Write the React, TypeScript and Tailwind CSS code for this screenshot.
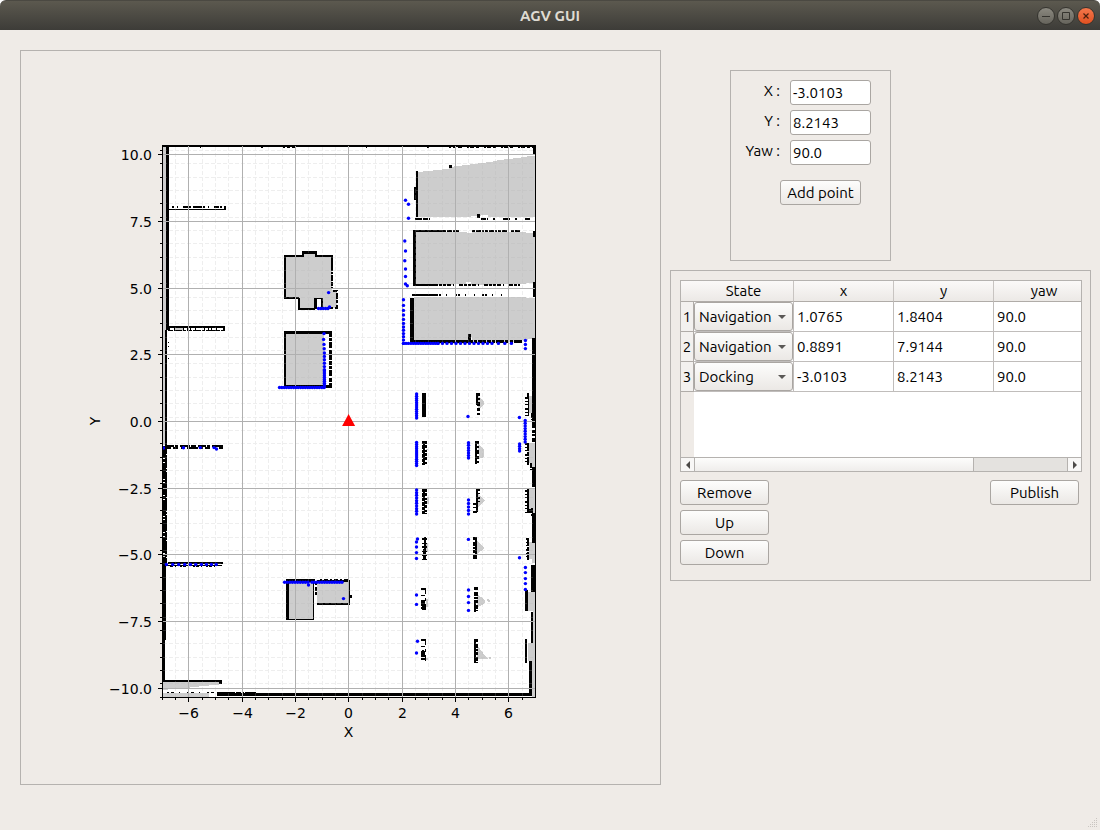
import React, { useState } from 'react';

type Box = [number, number, number, number];
type Point = [number, number];

const UI_FONT = "font-['Ubuntu','Noto_Sans','Open_Sans',sans-serif]";

const snap = (value: number) => Math.floor(value) + 0.5;

const X_MAJOR = [
  { at: 188.5, label: '−6' },
  { at: 242.5, label: '−4' },
  { at: 295.5, label: '−2' },
  { at: 348.5, label: '0' },
  { at: 402.5, label: '2' },
  { at: 455.5, label: '4' },
  { at: 508.5, label: '6' },
];

const Y_MAJOR = [
  { at: 154.5, label: '10.0' },
  { at: 221.5, label: '7.5' },
  { at: 288.5, label: '5.0' },
  { at: 354.5, label: '2.5' },
  { at: 421.5, label: '0.0' },
  { at: 488.5, label: '−2.5' },
  { at: 554.5, label: '−5.0' },
  { at: 621.5, label: '−7.5' },
  { at: 688.5, label: '−10.0' },
];

const X_MINOR = Array.from({ length: 28 }, (_, i) => snap(162.3 + i * 13.33)).filter(
  (x) => !X_MAJOR.some((m) => Math.abs(m.at - x) < 2),
);
const Y_MINOR = Array.from({ length: 42 }, (_, i) => snap(150.4 + i * 13.337));

/* Unknown space: light grey areas of the occupancy map. */
const UNKNOWN = [
  'M163 146h3v184h-1v115h-2z',
  'M163 555h2v8h-2z',
  'M163 682h56v3h-10v1h-10v1h-9v1h-16v1h-6v1h-5z',
  'M163 693h46v4h-46z',
  'M285 256h18v-4h14v4h15v34h5v18h-16v-10h-6v10l-16 2v-12h-14z',
  'M285 332h39v54h-39z',
  'M418 172h5v-1h10v-1h9v-1h7v-2h5v-1h8v-1h8v-1h8v-1h8v-1h7v-1h4v-1h7v-1h9v-1h8v-1h6v-1h8v61h-47v-2h-7v1h-10v1h-53z',
  'M416 232h51v1h5v-1h54v1h9v50h-9v1h-33v1h-22v-3h-5v2h-12v1h-38z',
  'M414 297h112v1h9v41h-7v1h-10v2h-46v-5h-4v5h-54z',
  'M288 582h26v38h-26z',
  'M317 582h32v22h-32z',
  'M529 396h6v24h-1v-7h-5z',
  'M528 443h7v24h-3v-4h-4z',
  'M529 489h6v25h-2v-4h-4z',
  'M529 542h6v21h-3v-4h-3z',
  'M528 592h7v19h-7z',
  'M528 643h7v54h-3v-36h-4z',
  'M533 611h2v32h-2z',
  'M478 396l6 5v4l-6 5z',
  'M478 444l6 5v8l-5 2z',
  'M478 494l7 6-7 7z',
  'M477 541l8 7-8 6z',
  'M477 594l8 6v3l-8 5z',
  'M477 645l6 8 5 6h-11z',
  'M426 449h2v1h-2zM427 497h2v7h-2zM426 543h2v9h-2zM426 599h2v8h-2zM426 658h2v2h-2z',
  'M487 599h2v1h1v2h-2v-1h-1zM489 657h2v2h-2z',
  'M174 327h9v4h-9z',
].join('');

/* Solid obstacles, as x, y, width and height. */
const WALLS: Box[] = [
  [163, 146, 372, 1],
  [166, 147, 3, 183],
  [165, 330, 2, 116],
  [163, 566, 3, 74],
  [163, 640, 2, 41],
  [163, 563, 3, 3],
  [163, 680, 58, 2],
  [219, 680, 3, 4],
  [256, 693, 276, 3],
  [217, 693, 40, 3],
  [224, 206, 2, 4],
  [169, 209, 56, 1],
  [168, 326, 57, 2],
  [223, 326, 2, 5],
  [219, 445, 4, 4],
  [168, 562, 55, 2],
  [166, 565, 56, 1],
  [284, 255, 2, 43],
  [284, 255, 20, 2],
  [302, 251, 2, 6],
  [303, 251, 14, 3],
  [315, 252, 2, 5],
  [316, 255, 16, 2],
  [284, 297, 15, 2],
  [298, 298, 2, 12],
  [298, 308, 17, 2],
  [314, 298, 3, 11],
  [321, 298, 2, 10],
  [314, 298, 9, 1],
  [331, 255, 2, 12],
  [284, 331, 48, 3],
  [284, 385, 48, 3],
  [284, 332, 2, 56],
  [416, 171, 2, 46],
  [414, 187, 2, 13],
  [449, 165, 3, 3],
  [477, 214, 3, 4],
  [415, 218, 7, 2],
  [413, 230, 3, 56],
  [413, 230, 30, 2],
  [413, 284, 23, 2],
  [410, 298, 4, 45],
  [412, 294, 24, 2],
  [410, 340, 50, 3],
  [468, 334, 3, 9],
  [286, 579, 29, 3],
  [286, 579, 3, 41],
  [287, 619, 27, 1],
  [313, 582, 1, 38],
  [317, 580, 33, 2],
  [317, 603, 33, 2],
  [349, 580, 1, 24],
  [350, 595, 2, 3],
  [422, 393, 4, 24],
  [533, 146, 2, 9],
  [533, 231, 2, 6],
  [533, 282, 2, 15],
  [532, 338, 3, 82],
  [532, 467, 3, 20],
  [532, 513, 3, 30],
  [531, 565, 4, 27],
  [531, 612, 2, 31],
  [529, 661, 3, 34],
  [527, 393, 2, 6],
  [528, 396, 1, 20],
  [527, 489, 2, 24],
  [525, 590, 3, 21],
  [525, 639, 2, 24],
  [476, 393, 2, 12],
  [475, 441, 2, 23],
  [476, 489, 2, 23],
  [475, 538, 2, 21],
  [474, 600, 2, 12],
  [474, 639, 2, 23],
  [423, 443, 2, 20],
  [423, 489, 2, 12],
  [423, 549, 1, 10],
  [422, 604, 3, 6],
  [422, 650, 2, 5],
];

/* Broken scan edges: a line, its thickness and its on/off rhythm. */
const EDGES: { d: string; width: number; dash: string }[] = [
  { d: 'M332 267V290', width: 2, dash: '4 1 2 1 6 1' },
  { d: 'M333 290.5H336.5V307.5H326', width: 2, dash: '4 2 6 1 3 2' },
  { d: 'M330.5 333V387', width: 3, dash: '4 1 3 1 6 2 4 1 5 1' },
  { d: 'M172 207H224', width: 2, dash: '2 3 1 5 5 1 2 2 9 1' },
  { d: 'M168 330.5H224', width: 1, dash: '5 1 8 1 3 1' },
  { d: 'M169 329H224', width: 3, dash: '1 4 1 8 1 3 1 2' },
  { d: 'M166 446H221', width: 2, dash: '8 1 3 2 10 1 5 2' },
  { d: 'M167 448H221', width: 2, dash: '4 2 5 3 3 3 11 1' },
  { d: 'M164 446V563', width: 3, dash: '12 1 3 1 16 1 2 1' },
  { d: 'M166 446V563', width: 2, dash: '8 1 13 1 2 1 16 1' },
  { d: 'M170 566.5H218', width: 1, dash: '3 2 1 4 2 1' },
  { d: 'M167 692.5H256', width: 1, dash: '2 2 3 5 1 7' },
  { d: 'M217 692.5H256', width: 1, dash: '18 1 5 1 2 1' },
  { d: 'M200 147.5H535', width: 1, dash: '1 60 2 20 2 2 3 2 4 70' },
  { d: 'M467 147.5H535', width: 1, dash: '2 1 4 2 3 5' },
  { d: 'M423 218.5H432M481 218.5H530', width: 2, dash: '5 1 1 5 2 8' },
  { d: 'M443 231H460M472 231H508M511 231H520', width: 2, dash: '3 1 5 1 2 1' },
  { d: 'M434 285H520', width: 2, dash: '4 1 3 1 3 1 4 2 1 5' },
  { d: 'M436 295H475M482 295H502', width: 2, dash: '2 1 2 5 1 8' },
  { d: 'M460 341.5H523', width: 3, dash: '8 1 4 1 3 1' },
  { d: 'M316 582V595', width: 2, dash: '3 2 4 1' },
  { d: 'M320 579.5H349', width: 1, dash: '2 2 4 2' },
  { d: 'M425.5 441V465M425.5 489V514', width: 3, dash: '3 1 3 2 2 1' },
  { d: 'M423.5 441V465M423.5 489V514', width: 3, dash: '3 1 4 1' },
  { d: 'M424 538V560', width: 5, dash: '2 3 1 2' },
  { d: 'M425 537V560', width: 2, dash: '9 2 12 1' },
  { d: 'M423 588V611M423 639V663', width: 4, dash: '2 5 1 4 6 1' },
  { d: 'M425 588V611M425 639V663', width: 1, dash: '6 4 3 3' },
  { d: 'M478 393V416M477.5 441V465', width: 3, dash: '3 2 2 2 4 2' },
  { d: 'M475 503V514M478 489V503', width: 4, dash: '2 2 1 3' },
  { d: 'M475 537V560M476 587V611M476 639V663', width: 4, dash: '3 2 4 1 2 1' },
  { d: 'M526 397V416M526 443V465M526 490V513M527 538V560', width: 3, dash: '2 2 1 2 1 3' },
  { d: 'M528 443V465M528 538V560', width: 2, dash: '8 1 4 1' },
  { d: 'M533.5 420V442', width: 3, dash: '8 2 3 1 2 2' },
  { d: 'M530 513V487', width: 2, dash: '4 30' },
  { d: 'M532 413V420M531 463V470M532 508V516', width: 2, dash: '5 1' },
  { d: 'M535 170V290', width: 1, dash: '8 20' },
  { d: 'M168 342.5H169M168 346.5H169M168 358.5H169', width: 1, dash: '2 0' },
];

const run = (x0: number, y0: number, x1: number, y1: number, step: number): Point[] => {
  const count = Math.max(1, Math.round(Math.hypot(x1 - x0, y1 - y0) / step));
  return Array.from({ length: count + 1 }, (_, i) => [
    Math.round((x0 + ((x1 - x0) * i) / count) * 10) / 10,
    Math.round((y0 + ((y1 - y0) * i) / count) * 10) / 10,
  ]);
};

/* Laser scan returns. */
const SCAN: Point[] = [
  [405.5, 200.3], [408.5, 204.3], [408.5, 218.3],
  [404.8, 241], [405.5, 251], [404.8, 260.7], [405.5, 269], [405.5, 276.5], [405.5, 284], [407.3, 285.8],
  [403.5, 299.7], [403.5, 305.4], [403.5, 310.4], [403.5, 315], [403.5, 319.4], [403.5, 323.4],
  ...run(403.5, 327, 403.5, 343.4, 3),
  ...run(403.5, 343.4, 438, 343.4, 2.5),
  ...run(438, 343.4, 492, 343.4, 4.6),
  [498.4, 343.4], [504.8, 343.4], [511.4, 343.4],
  [525.4, 340.5], [525.4, 344.5], [525.4, 348.6],
  [328.6, 292.6], ...run(318.5, 308.5, 328, 308.5, 2.2), [329.5, 307],
  [324, 333.6], [323.6, 339.4], [324, 344.4], [324.2, 348.8], ...run(324.4, 353, 324.4, 370, 3.2),
  ...run(324.4, 370, 324.4, 387, 2),
  ...run(279.5, 387.5, 324, 387.5, 2.3),
  [163.5, 448], [183.5, 447.8], [200.3, 447.6], [214, 447.6], [216.5, 449],
  [166.4, 564.5], [172.7, 564.5], [178.7, 564.5], [184.7, 564.5], [190.4, 564.5],
  [195.8, 564.5], [201.4, 564.5], [206.4, 564.5], [211.4, 564.5], [216.2, 564.5],
  ...run(284.6, 582.3, 308, 582.3, 2.6), [308.5, 585], ...run(312, 582.3, 342, 582.3, 2.6), [343.5, 598.6],
  ...run(416.6, 394, 416.6, 418, 2.2),
  ...run(416.6, 442.5, 416.6, 465.5, 2.1),
  ...run(416.6, 490, 416.6, 514, 2.6),
  [417.5, 539], [416.5, 542], [416.5, 547], [416.5, 552.6], [416.5, 558.5],
  [416.5, 595], [416.5, 604.4], [417.5, 641.2], [416.5, 653],
  [468, 416.5], ...run(468.5, 442.8, 468.5, 458, 2.5), ...run(468.5, 500, 468.5, 514, 3.4),
  [468.4, 539.4], [468.5, 590], [468.5, 596.5], [468.5, 602.6], [468.5, 610.4],
  [519.4, 417.5], ...run(525.2, 420.5, 525.2, 442, 2.7), ...run(519.6, 444, 519.6, 451, 2.4),
  [519.5, 557.7], [525.4, 567.5], [525.4, 572.6], [525.4, 578.6], [525.4, 583.6], [525.4, 589.5],
];

function MapPlot() {
  return (
    <svg
      viewBox="21 51 639 733"
      className="block h-auto w-full font-['DejaVu_Sans',sans-serif] text-[14px]"
      role="img"
      aria-label="Occupancy map with robot position"
    >
      <rect x="162" y="145" width="374" height="553" fill="#fff" />
      <g shapeRendering="crispEdges">
        <path d={UNKNOWN} fill="#cdcdcd" />
        <rect x="317" y="299" width="4" height="9" fill="#fff" />
        <path d={WALLS.map(([x, y, w, h]) => `M${x} ${y}h${w}v${h}h${-w}z`).join('')} />
        {EDGES.map((edge) => (
          <path
            key={edge.d}
            d={edge.d}
            fill="none"
            stroke="#000"
            strokeWidth={edge.width}
            strokeDasharray={edge.dash}
          />
        ))}
        <path
          d={
            X_MINOR.map((x) => `M${x} 697V146`).join('') +
            Y_MINOR.map((y) => `M163 ${y}H535`).join('')
          }
          stroke="#b0b0b0"
          strokeOpacity="0.22"
          strokeDasharray="4 2"
        />
        <path
          d={
            X_MAJOR.map(({ at }) => `M${at} 146V697`).join('') +
            Y_MAJOR.map(({ at }) => `M163 ${at}H535`).join('')
          }
          stroke="#b0b0b0"
        />
      </g>
      <g fill="#00f">
        {SCAN.map(([x, y], i) => (
          <circle key={i} cx={x} cy={y} r="1.7" />
        ))}
      </g>
      <path d="M348.6 414l6.5 12h-13z" fill="#f00" />
      <g shapeRendering="crispEdges" stroke="#000" fill="none">
        <path d="M162.5 145.5H535.5V697.5H162.5Z" />
        <path
          d={
            X_MAJOR.map(({ at }) => `M${at} 698v4`).join('') +
            Y_MAJOR.map(({ at }) => `M158 ${at}h4`).join('') +
            X_MINOR.map((x) => `M${x} 698v2`).join('') +
            Y_MINOR.map((y) => `M160 ${y}h2`).join('')
          }
        />
      </g>
      {X_MAJOR.map(({ at, label }) => (
        <text key={label} x={at} y="718" textAnchor="middle">
          {label}
        </text>
      ))}
      {Y_MAJOR.map(({ at, label }) => (
        <text key={label} x="152" y={at + 5} textAnchor="end">
          {label}
        </text>
      ))}
      <text x="348.5" y="737" textAnchor="middle">
        X
      </text>
      <text x="100" y="421" textAnchor="middle" transform="rotate(-90 100 421)">
        Y
      </text>
    </svg>
  );
}

const BUTTON =
  'h-[25px] rounded-[3px] border border-[#aaa6a2] bg-linear-to-b from-[#fdfdfc] to-[#ebe8e5] text-center leading-[23px] whitespace-nowrap';

function TitleBar() {
  const round = 'flex size-[18px] items-center justify-center rounded-full border border-[#35342f]';
  return (
    <header className="grid h-[30px] grid-cols-[1fr_auto_1fr] items-center rounded-t-[6px] border-t border-[#4b4942] bg-linear-to-b from-[#5c594f] to-[#3d3c38] px-[5px]">
      <h1 className="col-start-2 text-[15px] font-bold text-[#dfdbd2]">AGV GUI</h1>
      <div className="flex justify-end gap-[2px]">
        <button aria-label="Minimize" className={`${round} bg-linear-to-b from-[#8b8980] to-[#66645c]`}>
          <svg viewBox="0 0 16 16" className="size-4 shrink-0" fill="none" stroke="#35342f">
            <path d="M4 8.5h8" />
          </svg>
        </button>
        <button aria-label="Maximize" className={`${round} bg-linear-to-b from-[#8b8980] to-[#66645c]`}>
          <svg viewBox="0 0 16 16" className="size-4 shrink-0" fill="none" stroke="#35342f">
            <path d="M4.5 4.5h7v7h-7z" />
          </svg>
        </button>
        <button aria-label="Close" className={`${round} bg-linear-to-b from-[#f5774b] to-[#e0501f]`}>
          <svg viewBox="0 0 16 16" className="size-4 shrink-0" fill="none" stroke="#4a1f0e" strokeWidth="1.2">
            <path d="M5.5 5.5l5 5M10.500 5.500l-5 5" />
          </svg>
        </button>
      </div>
    </header>
  );
}

function PointForm() {
  const fields = [
    { id: 'point-x', label: 'X :', value: '-3.0103' },
    { id: 'point-y', label: 'Y :', value: '8.2143' },
    { id: 'point-yaw', label: 'Yaw :', value: '90.0' },
  ];
  return (
    <form
      className="ml-[60px] flex min-h-[191px] w-[161px] flex-col gap-[5px] border border-[#b5b2af] py-[9px]"
      onSubmit={(e) => e.preventDefault()}
    >
      {fields.map((field) => (
        <div key={field.id} className="flex gap-[10px]">
          <label htmlFor={field.id} className="w-[49px] text-right leading-[22px]">
            {field.label}
          </label>
          <input
            id={field.id}
            defaultValue={field.value}
            className="h-[25px] w-[81px] rounded-[3px] border border-[#aaa6a2] bg-white px-[2px]"
          />
        </div>
      ))}
      <button className={`${BUTTON} mt-[10px] ml-[49px] w-[81px]`}>Add point</button>
    </form>
  );
}

const ROWS = [
  { state: 'Navigation', x: '1.0765', y: '1.8404', yaw: '90.0' },
  { state: 'Navigation', x: '0.8891', y: '7.9144', yaw: '90.0' },
  { state: 'Docking', x: '-3.0103', y: '8.2143', yaw: '90.0' },
];

function StateSelect({ row, initial }: { row: number; initial: string }) {
  const [value, setValue] = useState(initial);
  return (
    <div className="relative">
      <select
        aria-label={`State of point ${row}`}
        value={value}
        onChange={(e) => setValue(e.target.value)}
        className="block h-[29px] w-full appearance-none rounded-[3px] border border-[#aaa6a2] bg-linear-to-b from-[#fdfdfc] to-[#ebe8e5] pr-4 pl-1"
      >
        <option>Navigation</option>
        <option>Docking</option>
      </select>
      <svg viewBox="0 0 8 4" className="pointer-events-none absolute top-[13px] right-[7px] h-1 w-2" fill="#5a5856">
        <path d="M0 0h8L4 4z" />
      </svg>
    </div>
  );
}

function PointTable() {
  const head = 'h-[21px] border-b border-[#b0aca8] p-0 text-center font-normal leading-5';
  const cell = 'h-[30px] border-r border-b border-[#c0bdbb] py-0 pr-0 pl-[3px]';
  return (
    <div className="flex h-[192px] flex-col overflow-hidden border border-[#b5b2af] bg-white">
      <div className="flex min-h-0 flex-1 flex-col overflow-hidden">
        <table className="w-[413px] table-fixed border-separate border-spacing-0">
          <colgroup>
            <col className="w-[13px]" />
            <col className="w-[100px]" />
            <col className="w-[100px]" />
            <col className="w-[100px]" />
            <col className="w-[100px]" />
          </colgroup>
          <thead className="bg-linear-to-b from-[#fbf9f8] to-[#ebe8e5]">
            <tr>
              <th className={head} />
              <th className={`${head} border-r border-r-[#c8c4c1]`}>State</th>
              <th className={`${head} border-r border-r-[#c8c4c1]`}>x</th>
              <th className={`${head} border-r border-r-[#c8c4c1]`}>y</th>
              <th className={head}>yaw</th>
            </tr>
          </thead>
          <tbody>
            {ROWS.map((row, i) => (
              <tr key={i}>
                <th
                  scope="row"
                  className="h-[30px] border-r border-b border-[#b0aca8] bg-[#f3f1ef] p-0 text-center font-normal"
                >
                  {i + 1}
                </th>
                <td className="h-[30px] border-r border-b border-[#c0bdbb] p-0">
                  <StateSelect row={i + 1} initial={row.state} />
                </td>
                <td className={cell}>{row.x}</td>
                <td className={cell}>{row.y}</td>
                <td className={cell}>{row.yaw}</td>
              </tr>
            ))}
          </tbody>
        </table>
        <div className="w-[13px] flex-1 bg-[#efebe7]" />
      </div>
      <div className="flex h-[14px] shrink-0 border-t border-[#b5b2af] bg-[#e4e2df]">
        <button aria-label="Scroll left" className="flex w-[14px] items-center justify-center border-r border-[#b5b2af] bg-[#f8f7f6]">
          <svg viewBox="0 0 4 8" className="h-2 w-1" fill="#4c4a48">
            <path d="M4 0v8L0 4z" />
          </svg>
        </button>
        <div className="flex-1">
          <div className="h-full w-3/4 border-r border-[#b5b2af] bg-linear-to-b from-[#fdfdfc] to-[#efedeb]" />
        </div>
        <button aria-label="Scroll right" className="flex w-[14px] items-center justify-center border-l border-[#b5b2af] bg-[#f8f7f6]">
          <svg viewBox="0 0 4 8" className="h-2 w-1" fill="#4c4a48">
            <path d="M0 0v8l4-4z" />
          </svg>
        </button>
      </div>
    </div>
  );
}

export default function App() {
  return (
    <div className={`flex min-h-screen flex-col bg-white text-[15px] leading-[22px] text-black ${UI_FONT}`}>
      <TitleBar />
      <main className="relative flex flex-1 items-start gap-[9px] bg-[#efebe7] pt-5 pr-[9px] pb-5 pl-5">
        <section className="min-w-0 flex-1 border border-[#b5b2af]">
          <MapPlot />
        </section>
        <aside className="flex w-[421px] shrink-0 flex-col gap-[9px] pt-5">
          <PointForm />
          <section className="border border-[#b5b2af] pt-[9px] pr-2 pb-[15px] pl-[9px]">
            <PointTable />
            <div className="mt-2 flex items-start justify-between pr-[3px]">
              <div className="flex flex-col gap-[5px]">
                <button className={`${BUTTON} w-[89px]`}>Remove</button>
                <button className={`${BUTTON} w-[89px]`}>Up</button>
                <button className={`${BUTTON} w-[89px]`}>Down</button>
              </div>
              <button className={`${BUTTON} w-[89px]`}>Publish</button>
            </div>
          </section>
        </aside>
        <svg viewBox="0 0 10 10" className="absolute right-0.5 bottom-0.5 size-[10px]" fill="#c9c5c1" shapeRendering="crispEdges">
          <path d="M8 0h1v1h-1zM6 2h1v1h-1zM8 2h1v1h-1zM4 4h1v1h-1zM6 4h1v1h-1zM8 4h1v1h-1zM2 6h1v1h-1zM4 6h1v1h-1zM6 6h1v1h-1zM8 6h1v1h-1zM0 8h1v1h-1zM2 8h1v1h-1zM4 8h1v1h-1zM6 8h1v1h-1zM8 8h1v1h-1z" />
        </svg>
      </main>
    </div>
  );
}
